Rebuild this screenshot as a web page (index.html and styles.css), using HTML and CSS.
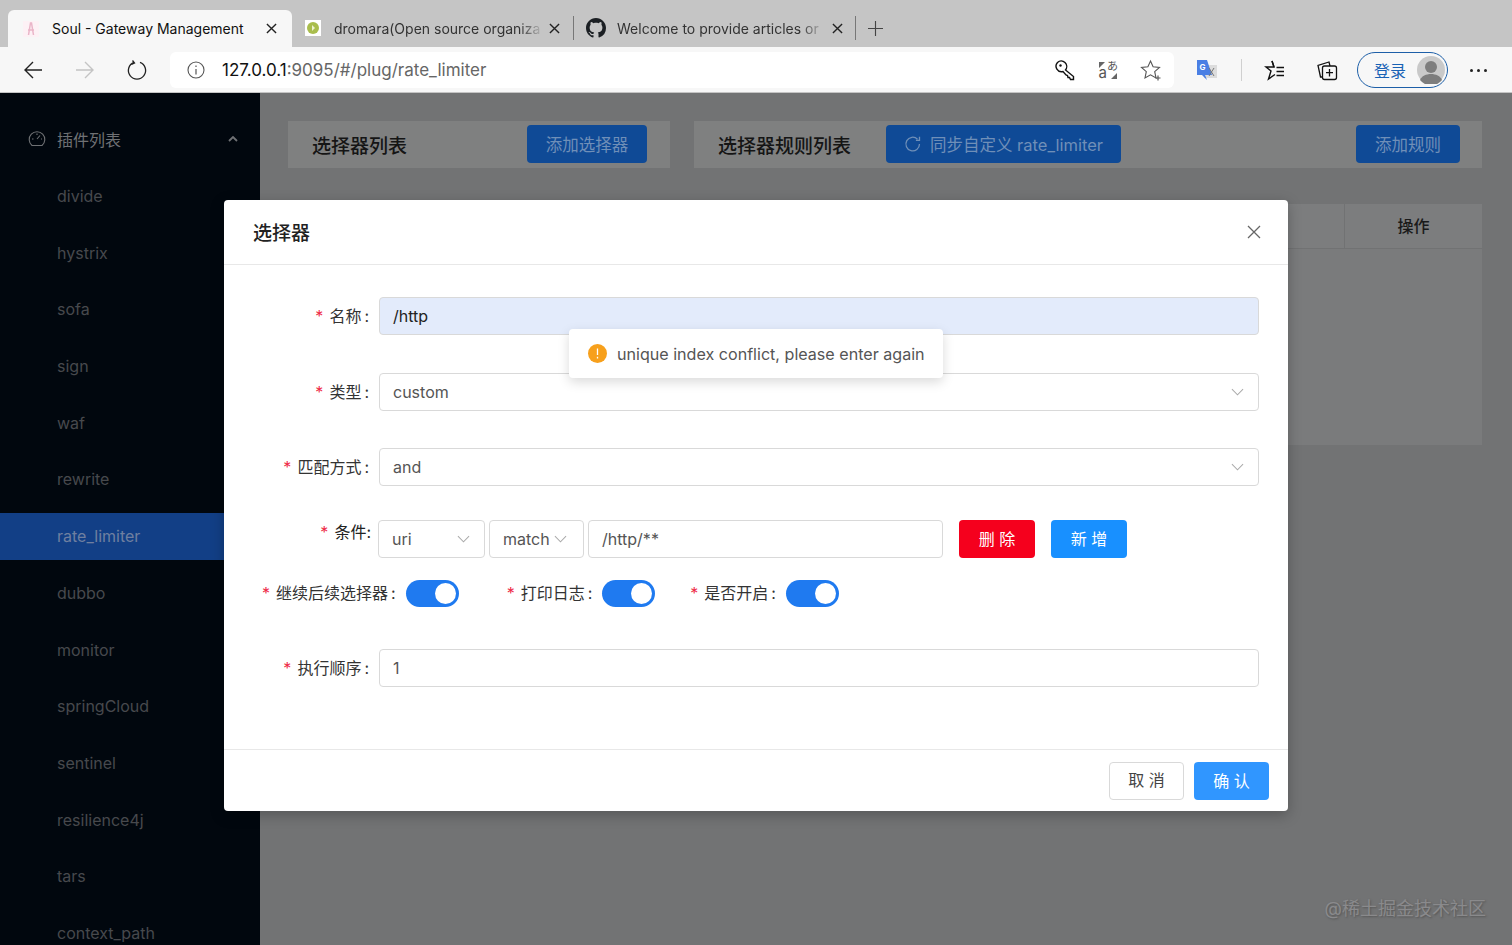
FILE: index.html
```html
<!DOCTYPE html>
<html lang="en">
<head>
    <meta charset="UTF-8">
    <title>Soul - Gateway Management</title>
    <link rel="stylesheet" href="styles.css">
</head>
<body>

    <svg class="sprites" width="0" height="0">
        <symbol id="chevron" viewBox="0 0 14 8"><path d="M1 1l6 6 6-6" fill="none" stroke="currentColor" stroke-width="1.1"/></symbol>
        <symbol id="close" viewBox="0 0 12 12"><path d="M1 1l10 10M11 1L1 11" fill="none" stroke="currentColor" stroke-width="1.5"/></symbol>
    </svg>

    <!-- browser chrome -->
    <div class="tab-bar">
        <div class="tab tab-active">
            <svg class="favicon" viewBox="0 0 16 16"><rect width="16" height="16" fill="#fdf1f5"/><path d="M5.500 14L7.500 2h1l2 12M5 9h6" fill="none" stroke="#eab5c8" stroke-width="1.500"/></svg>
            <span class="tab-title">Soul - Gateway Management</span>
            <svg class="tab-close"><use href="#close"/></svg>
        </div>
        <div class="tab tab-second">
            <svg class="favicon" viewBox="0 0 16 16"><rect width="16" height="16" fill="#fff"/><circle cx="8" cy="8" r="6" fill="#a9bd4d"/><path d="M7 5l3 3-3 3z" fill="#eef2d0"/></svg>
            <span class="tab-title tab-fade">dromara(Open source organiza</span>
            <svg class="tab-close"><use href="#close"/></svg>
        </div>
        <div class="tab tab-third">
            <svg class="github" viewBox="0 0 16 16"><path fill="#1b1f23" d="M8 0C3.58 0 0 3.58 0 8c0 3.54 2.29 6.53 5.47 7.59.4.07.55-.17.55-.38 0-.19-.01-.82-.01-1.49-2.01.37-2.53-.49-2.69-.94-.09-.23-.48-.94-.82-1.13-.28-.15-.68-.52-.01-.53.63-.01 1.08.58 1.23.82.72 1.21 1.87.87 2.33.66.07-.52.28-.87.51-1.07-1.78-.2-3.64-.89-3.64-3.95 0-.87.31-1.59.82-2.15-.08-.2-.36-1.02.08-2.12 0 0 .67-.21 2.2.82.64-.18 1.32-.27 2-.27s1.36.09 2 .27c1.53-1.04 2.2-.82 2.2-.82.44 1.1.16 1.92.08 2.12.51.56.82 1.27.82 2.15 0 3.07-1.87 3.75-3.65 3.95.29.25.54.73.54 1.48 0 1.07-.01 1.93-.01 2.2 0 .21.15.46.55.38A8.01 8.01 0 0016 8c0-4.42-3.58-8-8-8z"/></svg>
            <span class="tab-title tab-fade">Welcome to provide articles or</span>
            <svg class="tab-close"><use href="#close"/></svg>
        </div>
        <svg class="new-tab" viewBox="0 0 16 16"><path d="M8 0v16M0 8h16" fill="none" stroke="#444" stroke-width="1.2"/></svg>
    </div>

    <div class="tool-bar">
        <div class="nav-buttons">
            <svg class="nav-icon" viewBox="0 0 22 22"><path d="M20 11H3M11 3l-8 8 8 8" fill="none" stroke="#222" stroke-width="1.4"/></svg>
            <svg class="nav-icon" viewBox="0 0 22 22"><path d="M2 11h17M11 3l8 8-8 8" fill="none" stroke="#c4c4c4" stroke-width="1.4"/></svg>
            <svg class="nav-icon" viewBox="0 0 22 22"><path d="M8 3.400a8.600 8.600 0 1 0 6 0M6.500 1.500L8.500 4 5.500 5.500" fill="none" stroke="#222" stroke-width="1.3"/></svg>
        </div>
        <div class="address-bar">
            <svg class="info-icon" viewBox="0 0 18 18"><circle cx="9" cy="9" r="8" fill="none" stroke="#555" stroke-width="1.1"/><path d="M9 8v5.500M9 4.500v1.500" stroke="#555" stroke-width="1.2"/></svg>
            <div class="url"><span class="url-host">127.0.0.1</span>:9095/#/plug/rate_limiter</div>
            <svg class="bar-icon" viewBox="0 0 22 22"><path d="M3.500 3.500a5.500 5.500 0 0 1 8 7.500l8 6.500v3h-3l-1-2h-1.500l-.5-2-1.500-.5-3-3.500a5.500 5.500 0 0 1-5.500-9z" fill="none" stroke="#111" stroke-width="1.400"/><circle cx="6.500" cy="6.500" r="1.200" fill="#111"/></svg>
            <svg class="bar-icon bar-translate" viewBox="0 0 22 22">
                <text x="1.500" y="19" class="key-letter">a</text>
                <text x="10" y="11" class="key-kana">あ</text>
                <path d="M2 3h6L5 6 2 9zM20 20h-6l3-3 3-3z" fill="#666"/>
            </svg>
            <svg class="bar-icon" viewBox="0 0 22 22"><path d="M10.500 2l2.600 5.800 6.400.7-4.800 4.200 1.300 6.200-5.500-3.100L5 19l1.300-6.300L1.500 8.500l6.400-.7z" fill="none" stroke="#555" stroke-width="1.100"/><path d="M18 16.500v5M15.500 19h5" stroke="#555" stroke-width="1.200"/></svg>
        </div>
        <svg class="gt-icon" viewBox="0 0 22 22">
            <rect x="8" y="6" width="13" height="13" fill="#dcdcdc"/>
            <path d="M1 1h10l5 15H9l2 5-5-5H1z" fill="#4a7fe4"/>
            <text x="3.500" y="11" class="gt-letter">G</text>
            <path d="M13 9l5 8M18 9l-5 8" stroke="#777" stroke-width="1"/>
        </svg>
        <div class="tool-sep"></div>
        <svg class="tool-icon" viewBox="0 0 22 22"><path d="M8 2l2 6H2l5 4-2.500 8L11 15.500" fill="none" stroke="#111" stroke-width="1.400"/><path d="M8 2l2 6M12.500 8.500H20M12.500 12.500H20M12.500 16.500H20" fill="none" stroke="#111" stroke-width="1.400"/></svg>
        <svg class="tool-icon tool-collections" viewBox="0 0 22 22"><rect x="6.500" y="7" width="14" height="13.500" rx="2" fill="none" stroke="#111" stroke-width="1.300"/><path d="M6 18H4.500L2 6.500 13 3l1 4M13.500 10v7.500M10 13.700h7" fill="none" stroke="#111" stroke-width="1.300"/></svg>
        <div class="login-pill">
            <span class="login-text">登录</span>
            <svg class="avatar" viewBox="0 0 28 28"><circle cx="14" cy="14" r="14" fill="#c9c9c9"/><circle cx="14" cy="11" r="6" fill="#7d7d7d"/><path d="M3 24c3-8 19-8 22 0a14 14 0 0 1-22 0z" fill="#7d7d7d"/></svg>
        </div>
        <div class="more-dots"><i></i><i></i><i></i></div>
    </div>

    <!-- app, colours are as seen through the modal's dimming -->
    <div class="app">
        <div class="sidebar">
            <div class="menu-head">
                <svg class="menu-icon" viewBox="0 0 18 18"><path d="M4 15.500a7.800 7.800 0 1 1 10 0z" fill="none" stroke="currentColor" stroke-width="1.100"/><path d="M9 9l3-3.500M4 9h1.500M14 9h-1M9 3.500V5" stroke="currentColor" stroke-width="1.100"/></svg>
                <span class="menu-title">插件列表</span>
                <svg class="menu-caret" viewBox="0 0 10 6"><path d="M1 5l4-4 4 4" fill="none" stroke="currentColor" stroke-width="1.800"/></svg>
            </div>
            <div class="menu-item">divide</div>
            <div class="menu-item">hystrix</div>
            <div class="menu-item">sofa</div>
            <div class="menu-item">sign</div>
            <div class="menu-item">waf</div>
            <div class="menu-item">rewrite</div>
            <div class="menu-item menu-selected">rate_limiter</div>
            <div class="menu-item">dubbo</div>
            <div class="menu-item">monitor</div>
            <div class="menu-item">springCloud</div>
            <div class="menu-item">sentinel</div>
            <div class="menu-item">resilience4j</div>
            <div class="menu-item">tars</div>
            <div class="menu-item">context_path</div>
        </div>

        <div class="content">
            <div class="left-col">
                <div class="head-card">
                    <h3 class="card-title">选择器列表</h3>
                    <div class="btn-primary btn-selector">添加选择器</div>
                </div>
            </div>
            <div class="right-col">
                <div class="head-card">
                    <h3 class="card-title">选择器规则列表</h3>
                    <div class="btn-primary btn-sync">
                        <svg class="sync-icon" viewBox="0 0 18 18"><path d="M15.500 9a6.800 6.800 0 1 1-2-4.800M15.500 1.800v3.600h-3.600" fill="none" stroke="currentColor" stroke-width="1.300"/></svg>
                        同步自定义 rate_limiter
                    </div>
                    <div class="btn-primary btn-rule">添加规则</div>
                </div>
                <div class="table-card">
                    <div class="table-head">
                        <div class="table-cell-blank"></div>
                        <div class="table-cell-action">操作</div>
                    </div>
                </div>
            </div>
        </div>

        <div class="modal-layer">
            <div class="modal">
                <div class="modal-head">
                    <span class="modal-title">选择器</span>
                    <svg class="modal-close" viewBox="0 0 14 14"><path d="M1 1l12 12M13 1L1 13" fill="none" stroke="currentColor" stroke-width="1.300"/></svg>
                </div>
                <div class="modal-body">
                    <div class="form-row">
                        <div class="form-label"><span class="star">*</span>名称<span class="colon">:</span></div>
                        <div class="field field-filled">/http</div>
                    </div>
                    <div class="form-row">
                        <div class="form-label"><span class="star">*</span>类型<span class="colon">:</span></div>
                        <div class="field field-select">custom<svg class="chevron"><use href="#chevron"/></svg></div>
                    </div>
                    <div class="form-row">
                        <div class="form-label"><span class="star">*</span>匹配方式<span class="colon">:</span></div>
                        <div class="field field-select">and<svg class="chevron"><use href="#chevron"/></svg></div>
                    </div>
                    <div class="condition-row">
                        <div class="condition-label"><span class="star">*</span>条件:</div>
                        <div class="field field-select cond-uri">uri<svg class="chevron"><use href="#chevron"/></svg></div>
                        <div class="field field-select cond-match">match<svg class="chevron"><use href="#chevron"/></svg></div>
                        <div class="field cond-value">/http/**</div>
                        <div class="btn btn-danger">删 除</div>
                        <div class="btn btn-add">新 增</div>
                    </div>
                    <div class="switch-row">
                        <div class="switch-item">
                            <span class="star">*</span>继续后续选择器<span class="colon">:</span>
                            <div class="switch"><i></i></div>
                        </div>
                        <div class="switch-item switch-log">
                            <span class="star">*</span>打印日志<span class="colon">:</span>
                            <div class="switch"><i></i></div>
                        </div>
                        <div class="switch-item switch-on">
                            <span class="star">*</span>是否开启<span class="colon">:</span>
                            <div class="switch"><i></i></div>
                        </div>
                    </div>
                    <div class="form-row">
                        <div class="form-label"><span class="star">*</span>执行顺序<span class="colon">:</span></div>
                        <div class="field">1</div>
                    </div>
                </div>
                <div class="modal-foot">
                    <div class="btn btn-cancel">取 消</div>
                    <div class="btn btn-ok">确 认</div>
                </div>
            </div>
        </div>

        <div class="toast">
            <svg class="toast-icon" viewBox="0 0 19 19"><circle cx="9.500" cy="9.500" r="9.500" fill="#f7a01c"/><path d="M9.500 4.500v6.500M9.500 12.800v1.700" stroke="#fff" stroke-width="1.300"/></svg>
            unique index conflict, please enter again
        </div>

        <div class="watermark">@稀土掘金技术社区</div>
    </div>

</body>
</html>
```

FILE: styles.css
```css
* {
    box-sizing: border-box;
}
html, body {
    margin: 0;
    height: 100%;
    overflow: hidden;
}
body {
    font-family: Inter, "Noto Sans CJK SC", sans-serif;
    font-size: 16px;
    color: #333;
    background-color: #727374;
}
.sprites {
    position: absolute;
}

/* browser chrome */
.tab-bar {
    height: 47px;
    padding: 10px 0 0 8px;
    display: flex;
    background-color: #c5c5c5;
}
.tab {
    height: 37px;
    display: flex;
    align-items: center;
    font-size: 14px;
    color: #333;
}
.tab-active {
    width: 284px;
    padding: 0 15px;
    background-color: #f7f7f7;
    border-radius: 6px 6px 0 0;
    color: #111;
}
.tab-second {
    width: 282px;
    height: 24px;
    margin-top: 6px;
    padding: 0 13px;
    border-right: 1px solid #777;
}
.tab-third {
    width: 282px;
    height: 24px;
    margin-top: 6px;
    padding: 0 12px;
    border-right: 1px solid #777;
}
.favicon {
    width: 16px;
    height: 16px;
    flex: none;
}
.tab-title {
    margin-left: 13px;
    flex: 1;
    white-space: nowrap;
    overflow: hidden;
}
.tab-third .tab-title {
    margin-left: 11px;
}
.tab-fade {
    -webkit-mask-image: linear-gradient(to right, #000 90%, rgba(0, 0, 0, 0.15));
    mask-image: linear-gradient(to right, #000 90%, rgba(0, 0, 0, 0.15));
}
.tab-close {
    width: 11px;
    height: 11px;
    margin-left: 15px;
    flex: none;
    color: #222;
}
.tab-second .tab-close {
    margin-left: 9px;
}
.tab-third .tab-close {
    margin-left: 11px;
}
.github {
    width: 20px;
    height: 20px;
    flex: none;
}
.new-tab {
    width: 15px;
    height: 15px;
    margin: 11px 0 0 12px;
}
.tool-bar {
    height: 46px;
    padding-top: 1px;
    display: flex;
    align-items: center;
    background-color: #f7f7f7;
    border-bottom: 1px solid #c4c4c4;
}
.nav-buttons {
    width: 170px;
    padding-left: 22px;
    display: flex;
    gap: 30px;
}
.nav-icon {
    width: 22px;
    height: 22px;
}
.address-bar {
    width: 1004px;
    height: 36px;
    padding: 0 12px 0 17px;
    display: flex;
    align-items: center;
    background-color: #fff;
    border-radius: 6px;
}
.info-icon {
    width: 18px;
    height: 18px;
}
.url {
    margin-left: 17px;
    flex: 1;
    font-size: 17px;
    color: #666;
}
.url-host {
    color: #111;
}
.bar-icon {
    width: 22px;
    height: 22px;
    margin-left: 21px;
}
.bar-translate {
    overflow: visible;
}
.key-letter {
    font-size: 15px;
    fill: #555;
}
.key-kana {
    font-size: 11px;
    fill: #555;
}
.gt-icon {
    width: 22px;
    height: 22px;
    margin-left: 22px;
}
.gt-letter {
    font-size: 8px;
    font-weight: 700;
    fill: #fff;
}
.tool-sep {
    width: 1px;
    height: 22px;
    margin-left: 23px;
    background-color: #d0d0d0;
}
.tool-icon {
    width: 22px;
    height: 22px;
    margin-left: 22px;
}
.tool-collections {
    margin-left: 30px;
}
.login-pill {
    width: 91px;
    height: 36px;
    margin-left: 19px;
    padding: 0 2px 0 16px;
    display: flex;
    align-items: center;
    justify-content: space-between;
    border: 1.500px solid #1d5fa8;
    border-radius: 18px;
    color: #1862b5;
}
.login-text {
    font-size: 16px;
}
.avatar {
    width: 28px;
    height: 28px;
}
.more-dots {
    margin-left: 22px;
    display: flex;
    gap: 4px;
}
.more-dots i {
    width: 3px;
    height: 3px;
    border-radius: 50%;
    background-color: #222;
}

/* app */
.app {
    position: relative;
    height: 852px;
    display: flex;
    overflow: hidden;
}
.sidebar {
    width: 260px;
    flex: none;
    background-color: #01070e;
    box-shadow: 2px 0 6px rgba(0, 0, 0, 0.25);
    color: #47494d;
}
.menu-head {
    height: 47px;
    margin: 22px 0 11px;
    padding: 0 22px 0 28px;
    display: flex;
    align-items: center;
    color: #6f7174;
}
.menu-icon {
    width: 18px;
    height: 18px;
}
.menu-title {
    margin-left: 11px;
    flex: 1;
}
.menu-caret {
    width: 10px;
    height: 6px;
}
.menu-item {
    height: 47px;
    margin-bottom: 9.700px;
    padding-left: 57px;
    line-height: 47px;
}
.menu-selected {
    background-color: #123f86;
    color: #6f7fa0;
}
.content {
    flex: 1;
    padding: 28px 30px 0 28px;
    display: flex;
    gap: 24px;
    background-color: #727374;
}
.left-col {
    width: 382px;
    flex: none;
}
.right-col {
    flex: 1;
}
.head-card {
    height: 47px;
    padding: 0 22px 1px 24px;
    display: flex;
    align-items: center;
    background-color: #7f8080;
}
.card-title {
    margin: 0;
    font-size: 19px;
    font-weight: 500;
    color: #151515;
}
.btn-primary {
    height: 38px;
    display: flex;
    align-items: center;
    justify-content: center;
    background-color: #0f4a96;
    border-radius: 4px;
    font-size: 16.500px;
    color: #6f8fb8;
}
.btn-selector {
    width: 120px;
    margin-left: auto;
    margin-right: 1px;
}
.btn-sync {
    width: 235px;
    margin-left: 35px;
}
.sync-icon {
    width: 18px;
    height: 18px;
    margin-right: 8px;
}
.btn-rule {
    width: 104px;
    margin-left: auto;
}
.table-card {
    height: 241px;
    margin-top: 36px;
    background-color: #7a7b7c;
}
.table-head {
    height: 45px;
    display: flex;
    background-color: #7c7d7e;
    border-bottom: 1px solid #717273;
}
.table-cell-blank {
    flex: 1;
    border-right: 1px solid #717273;
}
.table-cell-action {
    width: 137px;
    text-align: center;
    line-height: 45px;
    font-weight: 500;
    color: #1a1a1a;
}

/* modal */
.modal-layer {
    position: absolute;
    top: 0;
    left: 0;
    width: 100%;
    height: 100%;
    padding-top: 107px;
    display: flex;
    justify-content: center;
    align-items: flex-start;
}
.modal {
    width: 1064px;
    height: 611px;
    display: flex;
    flex-direction: column;
    background-color: #fff;
    border-radius: 4px;
    box-shadow: 0 4px 14px rgba(0, 0, 0, 0.25);
}
.modal-head {
    height: 65px;
    padding: 0 27px 2px 29px;
    display: flex;
    align-items: center;
    justify-content: space-between;
    border-bottom: 1px solid #e8e8e8;
}
.modal-title {
    font-size: 19px;
    font-weight: 500;
    color: #222;
}
.modal-close {
    width: 14px;
    height: 14px;
    margin-top: 2px;
    color: #666;
}
.modal-body {
    flex: 1;
    padding: 32px 29px 0 0;
}
.form-row {
    display: grid;
    grid-template-columns: 147px 1fr;
    column-gap: 8px;
    margin-bottom: 37.500px;
}
.form-label {
    line-height: 38px;
    text-align: right;
}
.star {
    margin-right: 6px;
    color: #ee2a47;
}
.colon {
    margin: 0 2px 0 3px;
}
.field {
    height: 38px;
    padding: 0 13px;
    display: flex;
    align-items: center;
    justify-content: space-between;
    background-color: #fff;
    border: 1.500px solid #d9d9d9;
    border-radius: 4px;
    color: #555;
}
.field-filled {
    background-color: #e3ebfb;
    color: #222;
}
.chevron {
    width: 13px;
    height: 8px;
    color: #aaa;
    flex: none;
}
.field-select .chevron {
    margin-right: 1px;
}
.condition-row {
    height: 38px;
    margin-top: -3.500px;
    display: flex;
    align-items: center;
}
.condition-label {
    width: 154px;
    padding-right: 7px;
    align-self: flex-start;
    line-height: 25px;
    text-align: right;
    color: #222;
}
.cond-uri {
    width: 107px;
}
.cond-match {
    width: 95px;
    margin-left: 4px;
    padding-right: 15px;
}
.cond-value {
    width: 355px;
    margin-left: 4px;
}
.btn {
    width: 76px;
    height: 38px;
    line-height: 38px;
    text-align: center;
    border-radius: 4px;
    color: #fff;
}
.btn-danger {
    margin-left: 16px;
    background-color: #f5001d;
}
.btn-add {
    margin-left: 16px;
    background-color: #1890ff;
}
.switch-row {
    height: 27px;
    margin: 22px 0 42px;
    padding-left: 38px;
    display: flex;
}
.switch-item {
    display: flex;
    align-items: flex-start;
    line-height: 26px;
    white-space: nowrap;
}
.switch-log {
    margin-left: 48px;
}
.switch-on {
    margin-left: 35px;
}
.switch {
    width: 53px;
    height: 27px;
    margin-left: 8px;
    padding: 3px;
    display: flex;
    justify-content: flex-end;
    background-color: #1f7af0;
    border-radius: 14px;
}
.switch i {
    width: 21px;
    height: 21px;
    border-radius: 50%;
    background-color: #fff;
}
.modal-foot {
    height: 62px;
    padding: 12px 19px 0 0;
    display: flex;
    justify-content: flex-end;
    gap: 10px;
    border-top: 1px solid #e8e8e8;
}
.btn-cancel {
    width: 75px;
    background-color: #fff;
    border: 1.500px solid #d9d9d9;
    line-height: 35px;
    color: #444;
}
.btn-ok {
    width: 75px;
    background-color: #3096ff;
}

/* floats over the modal */
.toast {
    position: absolute;
    top: 236px;
    left: 569px;
    width: 374px;
    height: 49px;
    padding-left: 19px;
    display: flex;
    align-items: center;
    background-color: #fff;
    border-radius: 4px;
    box-shadow: 0 4px 12px rgba(0, 0, 0, 0.15);
    font-size: 16.100px;
    color: #555;
}
.toast-icon {
    width: 19px;
    height: 19px;
    margin-right: 10px;
}
.watermark {
    position: absolute;
    right: 26px;
    bottom: 25px;
    font-size: 18px;
    color: #8a8a8c;
    text-shadow: 1px 1px 2px #555;
}
```
